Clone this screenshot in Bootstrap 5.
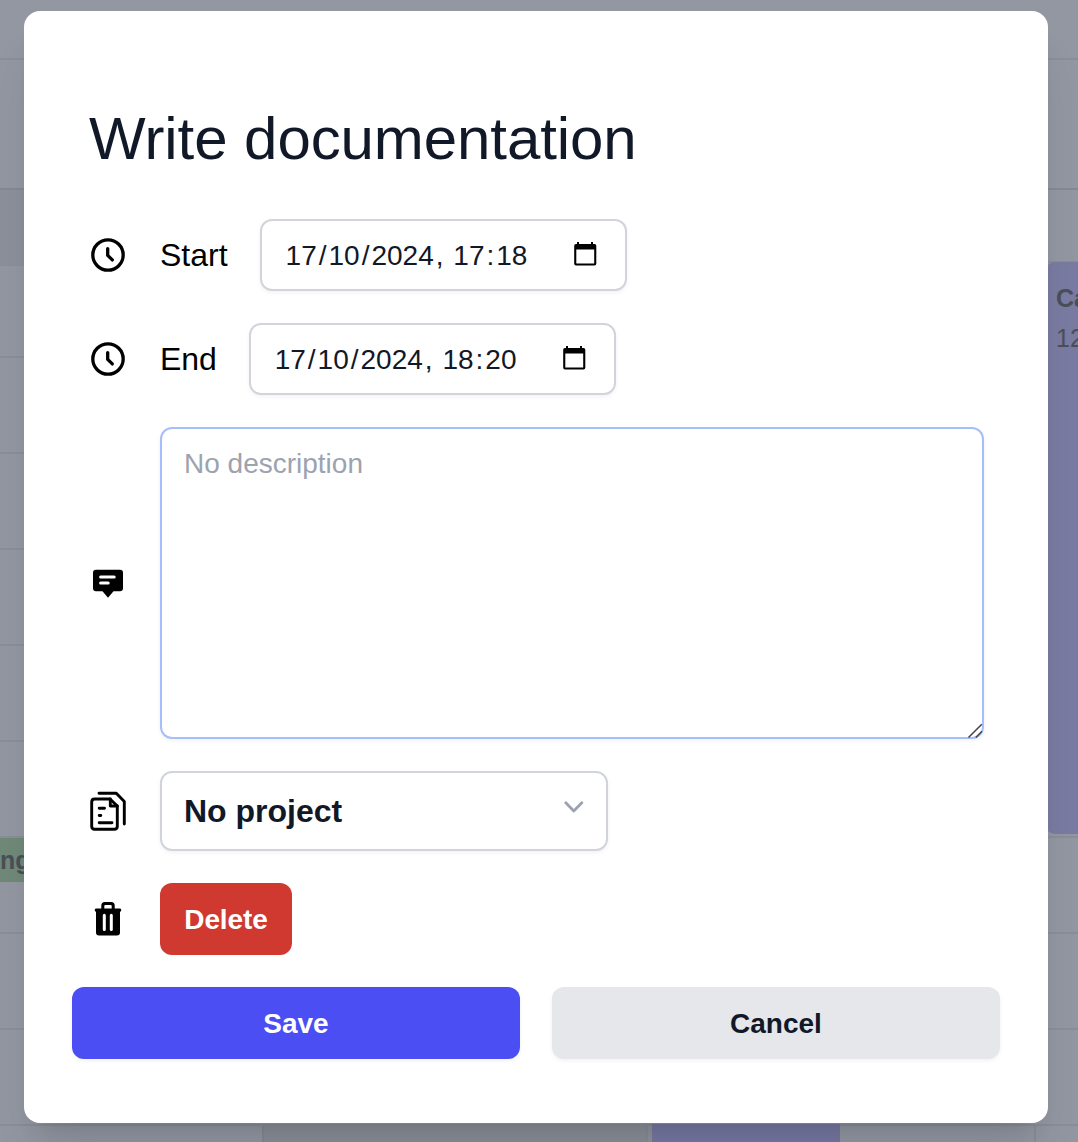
<!DOCTYPE html>
<html lang="en">
<head>
<meta charset="utf-8">
<meta name="viewport" content="width=device-width, initial-scale=1">
<title>Edit task</title>
<link href="https://cdn.jsdelivr.net/npm/bootstrap@5.3.0/dist/css/bootstrap.min.css" rel="stylesheet">
<style>
body{font-family:"Liberation Sans",Arial,sans-serif;background:#9297a2;color:#111827;height:1142px}
.stage{height:1142px}
.cal-layer{inset:0;color:#4b4f58}
.cal-body{height:1124px}
.cal-left{width:60px}
.cal-right{width:70px}
.slot{flex:none;border-bottom:2px solid #898e98;box-sizing:border-box}
.h60{height:60px}.h130{height:130px}.h92{height:92px}.h96{height:96px}.h73{height:73px}.h575{height:575px}
.slot-dark{background:#8b909a;height:76px;flex:none}
.slot-head{border-color:#848993}
.event-green{height:44px;background:#708978;top:838px;left:0;width:60px;font-size:25px;line-height:44px;font-weight:700}
.event-blue{top:262px;left:1045px;width:60px;height:572px;background:#797ba2;border-radius:10px;padding:16px 0 0 11px;font-size:25px;line-height:40px;white-space:nowrap}
.cal-foot{height:18px;border-top:2px solid #898e98}
.foot-a{width:262px}
.foot-b{width:384px;background:#8a8e98;border-left:2px solid #858a94}
.foot-gap{width:6px;background:#8e939d;border-left:2px solid #878b95}
.foot-c{width:188px;background:#7678a2;margin-top:-2px}
.foot-d{width:196px;border-right:2px solid #898e98}
.dialog-panel{margin:11px 30px 0 24px;width:1024px;height:1112px;border-radius:16px;padding:98px 48px 62px;box-shadow:0 40px 50px -10px rgba(0,0,0,.1),0 16px 20px -12px rgba(0,0,0,.1)}
.title-text{font-size:60px;line-height:60px;height:78px;margin:0 0 0 17px;font-weight:400;letter-spacing:-.08px;white-space:nowrap}
.rows{gap:32px;padding:0 16px;margin-top:32px}
.line{gap:32px}
.ico{width:40px;height:40px;flex:none}
.lbl{font-size:32px;line-height:48px;color:#000;letter-spacing:0}
.lbl-end{letter-spacing:-.1px}
.field{border:2px solid #d1d5db;border-radius:12px;box-shadow:0 2px 4px rgba(0,0,0,.05);background:#fff}
.date-field{width:367px;height:72px;padding:1px 28px 0 22px;font-size:28px;white-space:nowrap}
.date-field b{font-weight:400;padding:0 2px}
.cal-ico{width:24px;height:26px;margin-bottom:3px}
.desc{width:824px;height:312px;border-color:#a4bffb;padding:15px 22px 13px;font-size:28px;line-height:40px;color:#9ca3af}
.grip{right:-2px;bottom:-2px;width:18px;height:18px}
.proj{width:448px;height:80px;padding:0 22px;font-size:32px;font-weight:700}
.action{height:72px;border:0;border-radius:12px;font-size:28px;font-weight:700;padding:2px 0 0;box-shadow:0 2px 4px rgba(0,0,0,.05)}
.action-del{width:132px;background:#cf392f;color:#fff;box-shadow:none;letter-spacing:-.1px}
.action-save{background:#4b4ef2;color:#fff}
.action-cancel{background:#e5e7eb;color:#111827}
.footer-row{gap:32px;margin-top:32px}
</style>
<script src="https://cdn.jsdelivr.net/npm/bootstrap@5.3.0/dist/js/bootstrap.bundle.min.js"></script>
</head>
<body class="overflow-hidden">
<main class="stage position-relative overflow-hidden">
  <div class="cal-layer position-absolute overflow-hidden" aria-hidden="true">
    <div class="cal-body d-flex justify-content-between overflow-hidden">
      <div class="cal-left d-flex flex-column">
        <div class="slot h60"></div><div class="slot h130 slot-head"></div><div class="slot-dark"></div><div class="slot h92"></div>
        <div class="slot h96"></div><div class="slot h96"></div><div class="slot h96"></div><div class="slot h96"></div>
        <div class="slot h96"></div><div class="slot h96"></div><div class="slot h96"></div>
      </div>
      <div class="cal-right d-flex flex-column">
        <div class="slot h60"></div><div class="slot h130 slot-head"></div><div class="slot h73"></div>
        <div class="slot h575"></div><div class="slot h96"></div><div class="slot h96"></div>
      </div>
    </div>
    <div class="cal-foot d-flex">
      <div class="foot-a"></div><div class="foot-b"></div><div class="foot-gap"></div><div class="foot-c"></div><div class="foot-d"></div>
    </div>
    <div class="event-green position-absolute">ng</div>
    <div class="event-blue position-absolute"><strong>Ca</strong><br>12</div>
  </div>

  <section class="dialog-panel bg-white position-relative float-start" role="dialog" aria-labelledby="task-title">
    <h1 class="title-text" id="task-title">Write documentation</h1>
    <div class="rows d-flex flex-column">
      <div class="line d-flex align-items-center">
        <svg class="ico" viewBox="0 0 40 40" fill="none" stroke="#000" stroke-width="3.3" stroke-linecap="round" stroke-linejoin="round"><circle cx="20" cy="20" r="15.2"/><path d="M19.700 13.600V20.400L24.300 24.900"/></svg>
        <span class="lbl">Start</span>
        <div class="field date-field d-flex align-items-center justify-content-between"><span><b>17</b>/<b>10</b>/<b>2024</b>, <b>17</b>:<b>18</b></span>
          <svg class="cal-ico" viewBox="0 0 24 26"><path fill="#000" fill-rule="evenodd" d="M4 1h2v2h12V1h2v2h1.5A1.8 1.8 0 0 1 23.300 4.800V22.800A1.800 1.800 0 0 1 21.500 24.600H3A1.800 1.800 0 0 1 1.200 22.800V4.800A1.800 1.800 0 0 1 3 3H4ZM3.300 8.500V22.500H21.200V8.500Z"/></svg></div>
      </div>
      <div class="line d-flex align-items-center">
        <svg class="ico" viewBox="0 0 40 40" fill="none" stroke="#000" stroke-width="3.3" stroke-linecap="round" stroke-linejoin="round"><circle cx="20" cy="20" r="15.2"/><path d="M19.700 13.600V20.400L24.300 24.900"/></svg>
        <span class="lbl lbl-end">End</span>
        <div class="field date-field d-flex align-items-center justify-content-between"><span><b>17</b>/<b>10</b>/<b>2024</b>, <b>18</b>:<b>20</b></span>
          <svg class="cal-ico" viewBox="0 0 24 26"><path fill="#000" fill-rule="evenodd" d="M4 1h2v2h12V1h2v2h1.5A1.8 1.8 0 0 1 23.300 4.800V22.800A1.800 1.800 0 0 1 21.500 24.600H3A1.800 1.800 0 0 1 1.200 22.800V4.800A1.800 1.800 0 0 1 3 3H4ZM3.300 8.500V22.500H21.200V8.500Z"/></svg></div>
      </div>
      <div class="line d-flex align-items-center">
        <svg class="ico" viewBox="0 0 40 40"><path d="M8 6.700H32Q35 6.700 35 9.700V25.200Q35 28.200 32 28.200H25.500L20 34.700L14.500 28.200H8Q5 28.200 5 25.200V9.700Q5 6.700 8 6.700Z"/><path d="M12.600 14H26.200M12.600 20H20.200" stroke="#fff" stroke-width="3" stroke-linecap="round"/></svg>
        <div class="field desc position-relative">No description
          <svg class="grip position-absolute" viewBox="0 0 18 18" fill="none" stroke="#444" stroke-width="1.500"><path d="M2.500 16.500L15.800 3.200M9.800 16.500L16 10.300"/></svg></div>
      </div>
      <div class="line d-flex align-items-center">
        <svg class="ico" viewBox="0 0 40 40" fill="none" stroke="#000" stroke-width="2.900" stroke-linecap="round" stroke-linejoin="round"><path d="M11 2.200H28.300L36.300 10.400V33M22 8H6.700Q3.700 8 3.700 11V35.300Q3.700 38.300 6.700 38.300H26.300Q29.300 38.300 29.300 35.300V15Z"/><path d="M22.300 8V15H29.300M11.200 17.200H16.500M11.200 24.500H12.800M11.200 31.700H24"/></svg>
        <div class="field proj d-flex align-items-center justify-content-between"><span>No project</span>
          <svg width="20" height="14" viewBox="0 0 20 14" class="mb-2" fill="none" stroke="#9ca3af" stroke-width="2.800" stroke-linecap="round" stroke-linejoin="round"><path d="M1.800 2.800L9.800 11L17.800 2.800"/></svg></div>
      </div>
      <div class="line d-flex align-items-center">
        <svg class="ico" viewBox="0 0 40 40"><path fill-rule="evenodd" d="M13.300 9.500V6.500Q13.300 3 16.800 3H23.200Q26.700 3 26.700 6.500V9.500H32Q33.300 9.500 33.300 11.100T32 12.700H32V33.500Q32 36.500 29 36.500H11Q8 36.500 8 33.500V12.700H8Q6.700 12.700 6.700 11.100T8 9.500ZM16.300 9.500H23.700V7Q23.700 6 22.700 6H17.300Q16.300 6 16.300 7Z"/><path d="M16.300 16.200V30.500M23.300 16.200V30.500" stroke="#fff" stroke-width="3" stroke-linecap="round"/></svg>
        <button class="btn action action-del">Delete</button>
      </div>
    </div>
    <div class="footer-row d-flex">
      <button class="btn action action-save flex-fill w-50">Save</button>
      <button class="btn action action-cancel flex-fill w-50">Cancel</button>
    </div>
  </section>
</main>
</body>
</html>
